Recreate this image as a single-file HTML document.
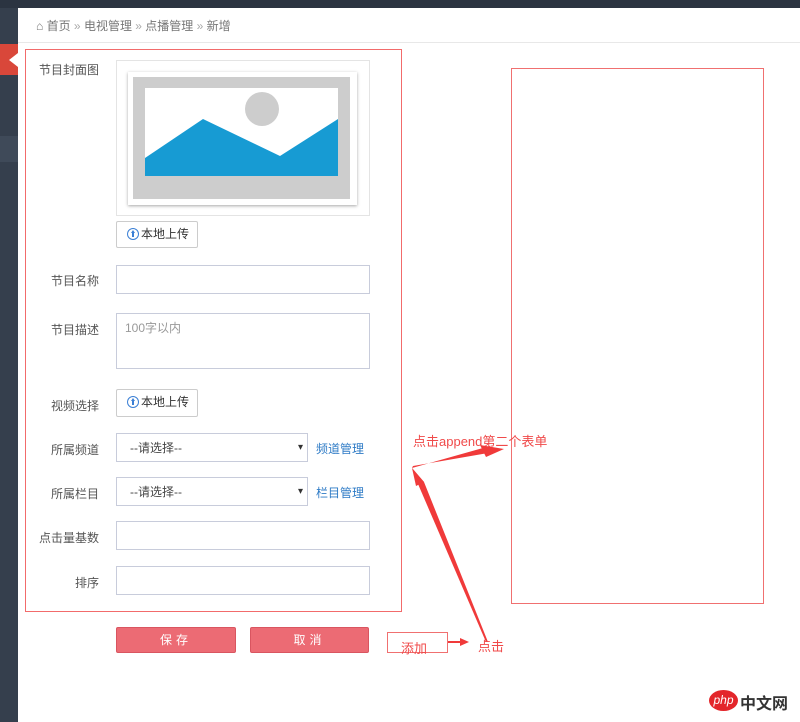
<!DOCTYPE html>
<html><head><meta charset="utf-8"><style>
*{margin:0;padding:0;box-sizing:border-box}
body{width:800px;height:722px;background:#fff;position:relative;overflow:hidden;font-family:"Liberation Sans","Noto Sans CJK SC",sans-serif;font-size:12px;color:#333}
.a{position:absolute}
.lbl{position:absolute;right:701px;text-align:right;color:#555;font-size:12px}
.inp{position:absolute;border:1px solid #c8ccdb;background:#fff}
.btn{position:absolute;border:1px solid #ccc;border-radius:2px;background:#fff;font-size:12px;color:#333;line-height:25px;padding-left:24px}
.btn i{position:absolute;left:10px;top:6px;width:12px;height:12px;border:1.5px solid #3a7fd5;border-radius:50%}
.btn i:after{content:"";position:absolute;left:3px;top:1px;border-left:2.5px solid transparent;border-right:2.5px solid transparent;border-bottom:3px solid #3a7fd5}
.btn i:before{content:"";position:absolute;left:4.2px;top:3px;width:1.5px;height:5px;background:#3a7fd5}
.sel{color:#444;padding-left:13px;line-height:28px}
.sel:after{content:"▾";position:absolute;right:4px;top:0;font-size:10px;color:#333}
.red{position:absolute;background:#ec6b74;border:1px solid #d95560;border-radius:2px;color:#fff;text-align:center;line-height:24px;letter-spacing:4px}
</style></head><body>
<div class="a" style="left:0;top:0;width:800px;height:8px;background:#2b3441"></div>
<div class="a" style="left:0;top:8px;width:18px;height:714px;background:#353f4d"></div>
<div class="a" style="left:0;top:136px;width:18px;height:26px;background:#3f4a59"></div>
<div class="a" style="left:0;top:44px;width:18px;height:31px;background:#d9473a"></div>
<div class="a" style="left:9px;top:53px;border-top:7px solid transparent;border-bottom:7px solid transparent;border-right:9px solid #fff"></div>
<div class="a" style="left:18px;top:42px;width:782px;height:1px;background:#e8e8e8"></div>
<div class="a" style="left:36px;top:17px;color:#777;font-size:12px">⌂ 首页 <span style="color:#aaa">»</span> 电视管理 <span style="color:#aaa">»</span> 点播管理 <span style="color:#aaa">»</span> 新增</div>

<div class="a" style="left:25px;top:49px;width:377px;height:563px;border:1px solid #f26b6b;z-index:5"></div>
<div class="lbl" style="top:61px">节目封面图</div>
<div class="a" style="left:116px;top:60px;width:254px;height:156px;border:1px solid #e4e4e4"></div>
<div class="a" style="left:128px;top:72px;width:229px;height:133px;background:#fff;box-shadow:0 1px 3px rgba(0,0,0,.35)"></div>
<div class="a" style="left:133px;top:77px;width:217px;height:122px;background:#cdcdcd"></div>
<svg class="a" style="left:145px;top:88px" width="193" height="88"><rect width="193" height="88" fill="#fff"/><circle cx="117" cy="21" r="17" fill="#cdcdcd"/><polygon points="0,70 58,31 135,68 193,31 193,88 0,88" fill="#179bd3"/></svg>
<div class="btn" style="left:116px;top:221px;width:82px;height:27px"><i></i>本地上传</div>

<div class="lbl" style="top:272px">节目名称</div>
<div class="inp" style="left:116px;top:265px;width:254px;height:29px"></div>
<div class="lbl" style="top:321px">节目描述</div>
<div class="inp" style="left:116px;top:313px;width:254px;height:56px;color:#999;padding:5px 8px">100字以内</div>
<div class="lbl" style="top:397px">视频选择</div>
<div class="btn" style="left:116px;top:389px;width:82px;height:28px"><i></i>本地上传</div>
<div class="lbl" style="top:441px">所属频道</div>
<div class="inp sel" style="left:116px;top:433px;width:192px;height:29px">--请选择--</div>
<div class="a" style="left:316px;top:440px;color:#2e7bc6">频道管理</div>
<div class="lbl" style="top:485px">所属栏目</div>
<div class="inp sel" style="left:116px;top:477px;width:192px;height:29px">--请选择--</div>
<div class="a" style="left:316px;top:484px;color:#2e7bc6">栏目管理</div>
<div class="lbl" style="top:529px">点击量基数</div>
<div class="inp" style="left:116px;top:521px;width:254px;height:29px"></div>
<div class="lbl" style="top:574px">排序</div>
<div class="inp" style="left:116px;top:566px;width:254px;height:29px"></div>

<div class="red" style="left:116px;top:627px;width:120px;height:26px">保存</div>
<div class="red" style="left:250px;top:627px;width:119px;height:26px">取消</div>

<div class="a" style="left:511px;top:68px;width:253px;height:536px;border:1px solid #f07070"></div>
<div class="a" style="left:413px;top:431px;color:#f04a4a;font-size:13px">点击append第二个表单</div>
<svg class="a" style="left:380px;top:420px" width="140" height="240"><polygon points="32,48 110,26 114,32 33,46" fill="#f03a3a"/><polygon points="100,25 124,29 106,37" fill="#f03a3a"/><polygon points="32,48 44,62 108,222 106,222 38,64" fill="#f03a3a"/><polygon points="32,48 44,62 36,66" fill="#f03a3a"/><line x1="67" y1="222" x2="82" y2="222" stroke="#f03a3a" stroke-width="2"/><polygon points="80,218 89,222 80,226" fill="#f03a3a"/></svg>
<div class="a" style="left:387px;top:632px;width:61px;height:21px;border:1px solid #f07070"></div>
<div class="a" style="left:401px;top:638px;color:#f04a4a;font-size:13px">添加</div>
<div class="a" style="left:478px;top:636px;color:#f04a4a;font-size:13px">点击</div>

<div class="a" style="left:709px;top:690px;width:29px;height:21px;border-radius:50%;background:#e3262b;color:#fff;font-size:12px;font-style:italic;text-align:center;line-height:20px">php</div>
<div class="a" style="left:740px;top:690px;font-size:16px;color:#333;font-weight:bold">中文网</div>
</body></html>
